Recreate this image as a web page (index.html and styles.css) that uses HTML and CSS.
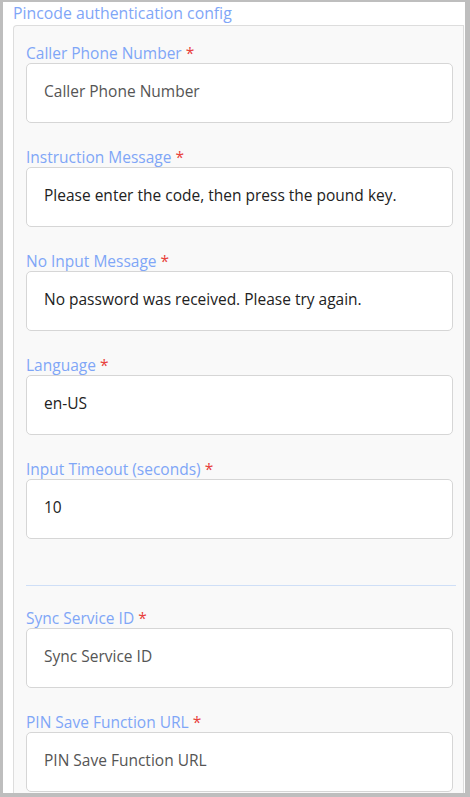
FILE: index.html
```html
<!DOCTYPE html>
<html>
<head>
<meta charset="utf-8">
<link rel="stylesheet" href="styles.css">
</head>
<body>
<div class="frame">
  <div class="title">Pincode authentication config</div>
  <div class="box">
    <div class="field">
      <label class="label">Caller Phone Number <span class="req">*</span></label>
      <input class="input" type="text" placeholder="Caller Phone Number">
    </div>
    <div class="field">
      <label class="label">Instruction Message <span class="req">*</span></label>
      <input class="input" type="text" value="Please enter the code, then press the pound key.">
    </div>
    <div class="field">
      <label class="label">No Input Message <span class="req">*</span></label>
      <input class="input" type="text" value="No password was received. Please try again.">
    </div>
    <div class="field">
      <label class="label">Language <span class="req">*</span></label>
      <input class="input" type="text" value="en-US">
    </div>
    <div class="field last">
      <label class="label">Input Timeout (seconds) <span class="req">*</span></label>
      <input class="input" type="text" value="10">
    </div>
    <div class="divider"></div>
    <div class="field">
      <label class="label">Sync Service ID <span class="req">*</span></label>
      <input class="input" type="text" placeholder="Sync Service ID">
    </div>
    <div class="field">
      <label class="label">PIN Save Function URL <span class="req">*</span></label>
      <input class="input" type="text" placeholder="PIN Save Function URL">
    </div>
  </div>
</div>
</body>
</html>
```

FILE: styles.css
```css
html, body {
  margin: 0;
  padding: 0;
}
body {
  background: #bebebe;
  font-family: "Open Sans", "Noto Sans", sans-serif;
  width: 470px;
  height: 797px;
  overflow: hidden;
}
.frame {
  margin: 2px 5px 0 3px;
  height: 791px;
  background: #ffffff;
  overflow: hidden;
}
.title {
  height: 23px;
  line-height: 22px;
  padding-left: 10px;
  font-size: 15.8px;
  color: #7fa6f7;
}
.box {
  margin: 0 1px 0 10px;
  border: 1px solid #dddddd;
  border-bottom: none;
  border-top-left-radius: 4px;
  background: #f9f9f9;
  padding: 17px 10px 40px 12px;
}
.field {
  display: flex;
  flex-direction: column;
  margin-bottom: 24px;
}
.field.last {
  margin-bottom: 47px;
}
.label {
  font-size: 15.5px;
  line-height: 20px;
  height: 20px;
  color: #7fa6f7;
}
.req {
  color: #e8413c;
}
.input {
  box-sizing: border-box;
  height: 60px;
  width: 100%;
  margin: 0;
  border: 1px solid #d6d6d6;
  border-radius: 5px;
  background: #ffffff;
  padding: 0 17px 5px 17px;
  font-family: "Open Sans", "Noto Sans", sans-serif;
  font-size: 15.5px;
  color: #222222;
  outline: none;
}
.input::placeholder {
  color: #555555;
  opacity: 1;
}
.divider {
  height: 1px;
  background: #cfdff7;
  margin: -1px -3px 22px 0;
}
```
